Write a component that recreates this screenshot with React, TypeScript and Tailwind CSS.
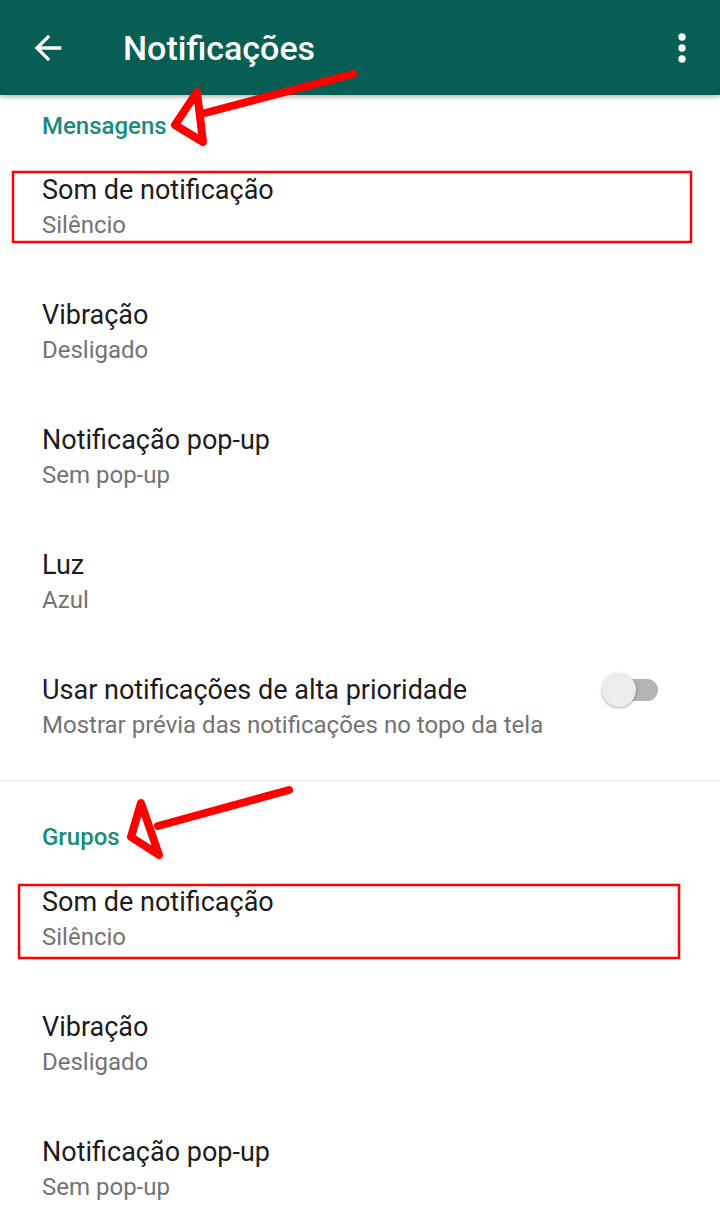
import React from "react";

const font = { fontFamily: "Roboto, 'Noto Sans', 'Liberation Sans', sans-serif" };

function Item({ title, sub, toggle }: { title: string; sub: string; toggle?: boolean }) {
  return (
    <div className="flex h-[125px] items-center pl-[42px] pr-[62px]">
      <div className="flex flex-1 flex-col gap-[3px]">
        <div className="whitespace-nowrap text-[27px] leading-[34px] text-[#1c1c1c]">{title}</div>
        <div className="whitespace-nowrap text-[24px] leading-[30px] text-[#737373]">{sub}</div>
      </div>
      {toggle && (
        <div className="relative -mt-[34px] h-[36px] w-[58px] shrink-0">
          <div className="absolute left-[8px] right-0 top-[7px] h-[22px] rounded-full bg-[#b3b3b3]" />
          <div className="absolute left-[2px] top-[1px] h-[34px] w-[34px] rounded-full bg-[#ececec] shadow-[0_1px_3px_rgba(0,0,0,0.35)]" />
        </div>
      )}
    </div>
  );
}

export default function App() {
  return (
    <div className="relative h-[1222px] w-[720px] overflow-hidden bg-white" style={font}>
      <header className="relative z-10 flex h-[95px] items-center bg-[#075e54] shadow-[0_2px_5px_rgba(0,0,0,0.3)]">
        <svg className="ml-[28px]" width="40" height="40" viewBox="0 0 24 24" fill="#ffffff">
          <path d="M20 11H7.83l5.59-5.59L12 4l-8 8 8 8 1.41-1.41L7.83 13H20v-2z" />
        </svg>
        <h1 className="ml-[55px] flex-1 text-[34px] font-medium leading-[40px] text-white">Notificações</h1>
        <svg className="mr-[16px]" width="44" height="44" viewBox="0 0 24 24" fill="#ffffff">
          <circle cx="12" cy="6" r="2" />
          <circle cx="12" cy="12" r="2" />
          <circle cx="12" cy="18" r="2" />
        </svg>
      </header>

      <section>
        <div className="pl-[42px] pt-[17px] pb-[4px] text-[24px] font-medium leading-[28px] text-[#1a8c7a]">Mensagens</div>
        <Item title="Som de notificação" sub="Silêncio" />
        <Item title="Vibração" sub="Desligado" />
        <Item title="Notificação pop-up" sub="Sem pop-up" />
        <Item title="Luz" sub="Azul" />
        <Item
          title="Usar notificações de alta prioridade"
          sub="Mostrar prévia das notificações no topo da tela"
          toggle
        />
      </section>

      <div className="mt-[11px] h-px bg-[#e4e4e4]" />

      <section>
        <div className="pl-[42px] pt-[42px] pb-[5px] text-[24px] font-medium leading-[28px] text-[#1a8c7a]">Grupos</div>
        <Item title="Som de notificação" sub="Silêncio" />
        <Item title="Vibração" sub="Desligado" />
        <Item title="Notificação pop-up" sub="Sem pop-up" />
      </section>

      <svg
        className="pointer-events-none absolute left-0 top-0 z-20"
        width="720"
        height="1222"
        viewBox="0 0 720 1222"
        fill="none"
      >
        <rect x="13" y="172" width="678" height="70" stroke="#ff0000" strokeWidth="2.5" />
        <rect x="19" y="885" width="660" height="73" stroke="#ff0000" strokeWidth="2.5" />
        <path
          d="M353 74 L205 113 M197 92 L175 125 L203 142 Z"
          stroke="#ff0000"
          strokeWidth="8"
          strokeLinecap="round"
          strokeLinejoin="round"
        />
        <path
          d="M289 790 L158 826 M141 803 L131 837 L159 855 Z"
          stroke="#ff0000"
          strokeWidth="8"
          strokeLinecap="round"
          strokeLinejoin="round"
        />
      </svg>
    </div>
  );
}
